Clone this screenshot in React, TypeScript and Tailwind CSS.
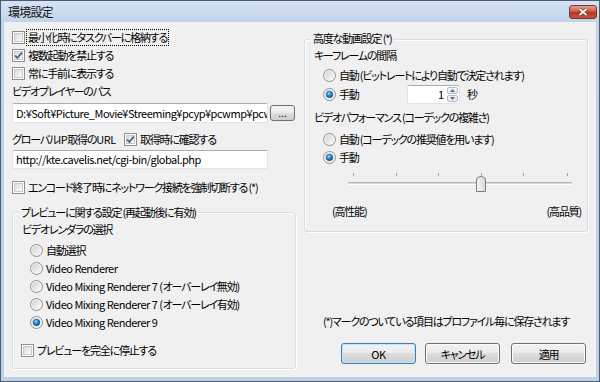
import React from "react";

const Check = ({ checked = false }: { checked?: boolean }) => (
  <span className="relative inline-flex w-[13px] h-[13px] shrink-0 border border-[#8e8f8f] bg-white p-[1px]">
    <span className="block w-full h-full border border-[#c8c8c8] bg-linear-to-br from-[#dcdcdc] to-[#fbfbfb]" />
    {checked && (
      <svg className="absolute left-0 top-0" width="11" height="11" viewBox="0 0 11 11">
        <path d="M2.2 5.6 L4.4 8 L8.8 2.6" fill="none" stroke="#4a5f8c" strokeWidth="1.7" />
      </svg>
    )}
  </span>
);

const Radio = ({ checked = false }: { checked?: boolean }) => (
  <svg width="13" height="13" viewBox="0 0 13 13" className="shrink-0">
    <defs>
      <linearGradient id="rgBg" x1="0" y1="0" x2="1" y2="1">
        <stop offset="0" stopColor="#d2d2d2" />
        <stop offset="1" stopColor="#fbfbfb" />
      </linearGradient>
      <radialGradient id="rgDot" cx="0.4" cy="0.35" r="0.65">
        <stop offset="0" stopColor="#9fe1ff" />
        <stop offset="0.45" stopColor="#2b93d6" />
        <stop offset="1" stopColor="#10477f" />
      </radialGradient>
    </defs>
    <circle cx="6.5" cy="6.5" r="6" fill="#f4f4f4" stroke="#8e8f8f" />
    <circle cx="6.5" cy="6.5" r="4.5" fill="url(#rgBg)" />
    {checked && <circle cx="6.5" cy="6.5" r="3.3" fill="url(#rgDot)" stroke="#1a5a92" strokeWidth="0.6" />}
  </svg>
);

const Row = ({ children, className = "" }: { children: React.ReactNode; className?: string }) => (
  <div className={"flex items-center h-[18px] whitespace-nowrap " + className}>{children}</div>
);

const L = ({ children }: { children: React.ReactNode }) => <span className="tracking-[-0.5px]">{children}</span>;

const btnCls =
  "h-[21px] w-[75px] rounded-[3px] border bg-[linear-gradient(#f2f2f2,#ebebeb_50%,#dddddd_50%,#cfcfcf)] text-[11px] leading-[18px] text-black flex items-center justify-center";

export default function App() {
  return (
    <div className="w-[600px] h-[382px] overflow-hidden border border-[#4a5d73] bg-[linear-gradient(#d6e3f3,#c1d3ea_22px,#bfd1e8)] flex flex-col font-['Noto_Sans_CJK_JP',sans-serif] text-[11px] tracking-[-1.2px] text-black [font-feature-settings:'palt']">
      {/* title bar */}
      <div className="h-[21px] shrink-0 flex items-center justify-between pl-[7px] pr-[2px]">
        <span className="text-[12px] leading-[16px] text-[#111] tracking-[-0.8px]">環境設定</span>
        <div className="w-[28px] h-[14px] mt-[1px] rounded-[3px] border border-[#6e3a34] bg-[linear-gradient(#e3a093,#cf5a45_45%,#b8341f_55%,#c9543b)] flex items-center justify-center">
          <svg width="10" height="8" viewBox="0 0 10 8">
            <path d="M1.5 1 L8.5 7 M8.5 1 L1.5 7" stroke="#5a2a22" strokeWidth="3" />
            <path d="M1.5 1 L8.5 7 M8.5 1 L1.5 7" stroke="#ffffff" strokeWidth="1.8" />
          </svg>
        </div>
      </div>
      {/* client */}
      <div className="flex-1 mx-[3px] mb-[4px] bg-[#f0f0f0] flex pl-[8px] gap-[8px]">
        {/* left column */}
        <div className="w-[284px] flex flex-col pt-[6px]">
          <Row>
            <Check />
            <span className="ml-[1px] border border-dotted border-black px-[1px] leading-[15px]">最小化時にタスクバーに格納する</span>
          </Row>
          <Row>
            <Check checked />
            <span className="ml-[3px]">複数起動を禁止する</span>
          </Row>
          <Row>
            <Check />
            <span className="ml-[3px]">常に手前に表示する</span>
          </Row>
          <Row>
            <span>ビデオプレイヤーのパス</span>
          </Row>
          <div className="mt-[3px] flex items-center gap-[2px]">
            <div className="w-[256px] h-[20px] bg-white border border-[#e2e3ea] border-t-[#abadb3] rounded-[2px] pl-[3px] overflow-hidden whitespace-nowrap leading-[18px] tracking-[-0.5px]">
              D:¥Soft¥Picture_Movie¥Streeming¥pcyp¥pcwmp¥pcwmp.exe
            </div>
            <div className="w-[25px] h-[16px] rounded-[3px] border border-[#707070] bg-[linear-gradient(#f2f2f2,#ebebeb_50%,#dddddd_50%,#cfcfcf)] flex items-center justify-center text-[10px] leading-[10px] tracking-normal">
              ...
            </div>
          </div>
          <Row className="mt-[7px]">
            <span className="w-[112px]">
              グローバル<L>IP</L>取得の<L>URL</L>
            </span>
            <Check checked />
            <span className="ml-[3px]">取得時に確認する</span>
          </Row>
          <div className="mt-[2px] w-[256px] h-[19px] bg-white border border-[#e2e3ea] border-t-[#abadb3] rounded-[2px] pl-[3px] overflow-hidden whitespace-nowrap leading-[17px] tracking-[-0.5px]">
            http://kte.cavelis.net/cgi-bin/global.php
          </div>
          <Row className="mt-[9px]">
            <Check />
            <span className="ml-[3px]">エンコード終了時にネットワーク接続を強制切断する (*)</span>
          </Row>
          <div className="relative mt-[16px] h-[157px] border border-[#d5dfe5] rounded-[3px] shadow-[inset_1px_1px_0_#ffffff,1px_1px_0_#ffffff] pl-[9px] pt-[7px] flex flex-col">
            <span className="absolute -top-[10px] left-[6px] bg-[#f0f0f0] px-[2px] leading-[18px] whitespace-nowrap">
              プレビューに関する設定 (再起動後に有効)
            </span>
            <Row>
              <span>ビデオレンダラの選択</span>
            </Row>
            <div className="mt-[3px] pl-[8px] flex flex-col">
              <Row>
                <Radio />
                <span className="ml-[3px]">自動選択</span>
              </Row>
              <Row>
                <Radio />
                <span className="ml-[3px]">
                  <L>Video Renderer</L>
                </span>
              </Row>
              <Row>
                <Radio />
                <span className="ml-[3px]">
                  <L>Video Mixing Renderer 7 (</L>オーバーレイ無効)
                </span>
              </Row>
              <Row>
                <Radio />
                <span className="ml-[3px]">
                  <L>Video Mixing Renderer 7 (</L>オーバーレイ有効)
                </span>
              </Row>
              <Row>
                <Radio checked />
                <span className="ml-[3px]">
                  <L>Video Mixing Renderer 9</L>
                </span>
              </Row>
            </div>
            <Row className="mt-[10px] -ml-[1px]">
              <Check />
              <span className="ml-[3px]">プレビューを完全に停止する</span>
            </Row>
          </div>
        </div>
        {/* right column */}
        <div className="w-[284px] flex flex-col pt-[17px]">
          <div className="relative h-[193px] border border-[#d5dfe5] rounded-[3px] shadow-[inset_1px_1px_0_#ffffff,1px_1px_0_#ffffff] pl-[9px] pt-[6px] flex flex-col">
            <span className="absolute -top-[11px] left-[6px] bg-[#f0f0f0] px-[2px] leading-[18px] whitespace-nowrap">
              高度な動画設定 (*)
            </span>
            <Row>
              <span>キーフレームの間隔</span>
            </Row>
            <div className="pl-[9px] flex flex-col">
              <Row className="mt-[2px]">
                <Radio />
                <span className="ml-[3px]">自動 (ビットレートにより自動で決定されます)</span>
              </Row>
              <div className="mt-[1px] flex items-center h-[19px]">
                <Radio checked />
                <span className="ml-[3px] w-[68px]">手動</span>
                <div className="w-[53px] h-[19px] bg-white border border-[#e2e3ea] border-t-[#abadb3] rounded-[2px] flex">
                  <span className="flex-1 text-right pr-[3px] leading-[17px] tracking-normal">1</span>
                  <div className="w-[12px] flex flex-col gap-[1px] py-[1px] pr-[1px]">
                    <div className="flex-1 rounded-[2px] border border-[#b6bcc6] bg-[linear-gradient(#f4f6f9,#e3e7ee)] flex items-center justify-center">
                      <svg width="5" height="3" viewBox="0 0 5 3">
                        <path d="M0 3 L2.5 0 L5 3 Z" fill="#5a6a84" />
                      </svg>
                    </div>
                    <div className="flex-1 rounded-[2px] border border-[#b6bcc6] bg-[linear-gradient(#f4f6f9,#e3e7ee)] flex items-center justify-center">
                      <svg width="5" height="3" viewBox="0 0 5 3">
                        <path d="M0 0 L2.5 3 L5 0 Z" fill="#5a6a84" />
                      </svg>
                    </div>
                  </div>
                </div>
                <span className="ml-[7px]">秒</span>
              </div>
            </div>
            <Row className="mt-[4px]">
              <span>ビデオパフォーマンス (コーデックの複雑さ)</span>
            </Row>
            <div className="pl-[9px] flex flex-col">
              <Row className="mt-[4px]">
                <Radio />
                <span className="ml-[3px]">自動 (コーデックの推奨値を用います)</span>
              </Row>
              <Row>
                <Radio checked />
                <span className="ml-[3px]">手動</span>
              </Row>
            </div>
            <div className="mt-[4px] ml-[34px] h-[25px]">
              <svg width="224" height="25" viewBox="0 0 224 25">
                {[5, 48, 90, 133, 175, 219].map((x) => (
                  <rect key={x} x={x} y={3} width={1} height={3} fill="#a0a0a0" />
                ))}
                <rect x="0" y="12" width="224" height="1" fill="#b4b4b4" />
                <rect x="0" y="13" width="224" height="1" fill="#dcdcdc" />
                <rect x="0" y="14" width="224" height="1" fill="#ffffff" />
                <defs>
                  <linearGradient id="thumbG" x1="0" y1="0" x2="1" y2="0">
                    <stop offset="0" stopColor="#f6f6f6" />
                    <stop offset="1" stopColor="#d8d8d8" />
                  </linearGradient>
                </defs>
                <path
                  d="M128.5 21.5 L128.5 10 Q128.5 7.5 131 7 L133 6.5 L135 7 Q137.5 7.5 137.5 10 L137.5 21.5 Z"
                  fill="url(#thumbG)"
                  stroke="#7c7c7c"
                />
              </svg>
            </div>
            <Row className="mt-[7px] pl-[18px] pr-[6px] justify-between">
              <span>(高性能)</span>
              <span>(高品質)</span>
            </Row>
          </div>
          <Row className="mt-[80px] pl-[19px]">
            <span>(*)マークのついている項目はプロファイル毎に保存されます</span>
          </Row>
          <div className="mt-[13px] flex justify-end pr-[2px]">
            <div className={btnCls + " border-[#3c7fb1] shadow-[inset_0_0_0_1px_#c4e5f6]"}>
              <L>OK</L>
            </div>
            <div className={btnCls + " ml-[9px] border-[#707070] shadow-[inset_0_0_0_1px_#fbfbfb]"}>キャンセル</div>
            <div className={btnCls + " ml-[11px] border-[#707070] shadow-[inset_0_0_0_1px_#fbfbfb]"}>適用</div>
          </div>
        </div>
      </div>
    </div>
  );
}
